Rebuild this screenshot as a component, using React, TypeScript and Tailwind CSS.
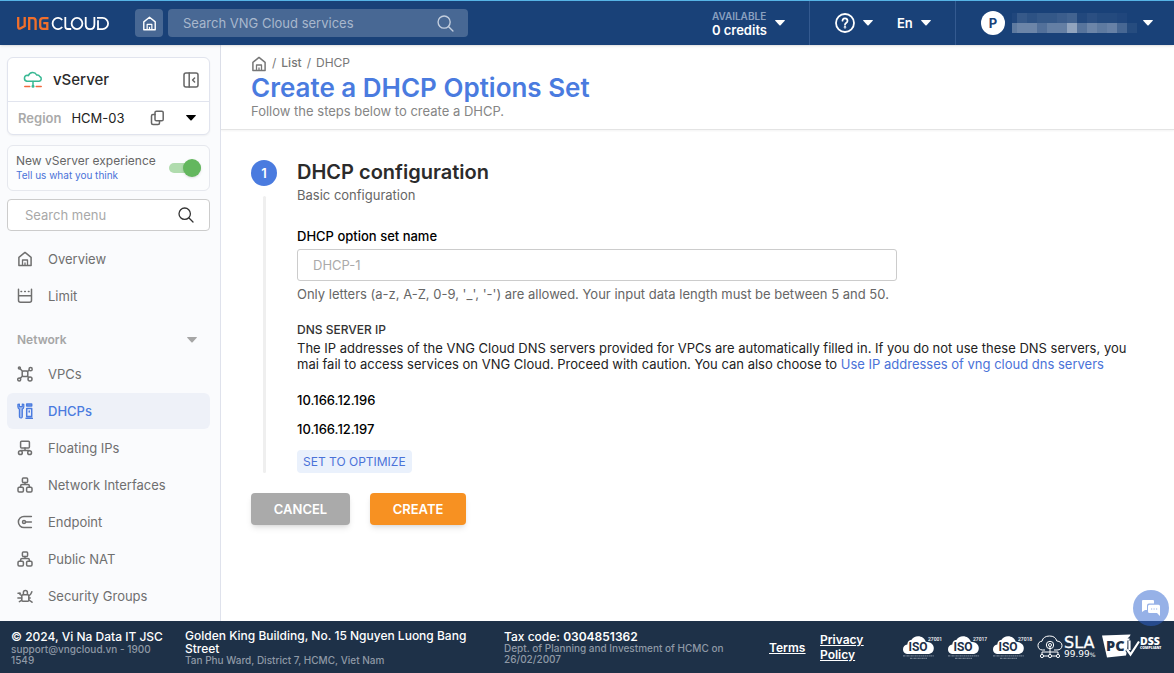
import React from "react";

type IconProps = { className?: string };

function Icon({ children, className = "size-4" }: { children: React.ReactNode; className?: string }) {
  return (
    <svg viewBox="0 0 16 16" className={`${className} shrink-0`} fill="none" stroke="currentColor" strokeWidth="1.5" strokeLinejoin="round" strokeLinecap="round" aria-hidden="true">
      {children}
    </svg>
  );
}

const HomeIcon = ({ className }: IconProps) => (
  <Icon className={className}>
    <path d="M1.9 6.3 8 1.4l6.100 4.900v8.300H1.900z" />
    <path d="M5.500 14.400V9h5v5.400M8 12v2.400" strokeWidth="1.300" />
  </Icon>
);
const LimitIcon = () => (
  <Icon>
    <path d="M1.5 1.3v11a2 2 0 0 0 2 2h9a2 2 0 0 0 2-2v-11M1.5 7.8h13" />
    <path d="M4 3.500h.6M7.700 3.500h.6M11.400 3.500h.6" />
  </Icon>
);
const VpcIcon = () => (
  <Icon>
    <rect x="5.2" y="5" width="5.6" height="5.4" rx="1.2" />
    <circle cx="2.4" cy="2" r="1" /><circle cx="13.6" cy="3.2" r="1.6" />
    <circle cx="2.2" cy="13.4" r="1.5" /><circle cx="13" cy="13" r="2" />
    <path d="m3.2 2.8 2.2 2.4M12.3 4.2l-1.8 1.3M5.4 10.2 3.2 12.4M10.6 10.2l1 1.2" />
  </Icon>
);
const DhcpIcon = () => (
  <Icon>
    <path d="M.9 1.400v2.400c0 1.300.7 1.900 1.500 2.400v7.300c0 2 2.900 2 2.900 0V6.200c.8-.5 1.500-1.100 1.500-2.400V1.400L5.300 1v2.600H2.400V1z" fill="currentColor" fillOpacity=".45" strokeWidth="1.200" />
    <path d="M9.700 1h5v2h-5z" fill="currentColor" fillOpacity=".5" />
    <path d="M9.700 5.600h5v8h-5zM9 15.200h6.400" />
    <path d="M12.200 8v1" />
  </Icon>
);
const FloatingIcon = () => (
  <Icon>
    <rect x="3.6" y="1.2" width="8.8" height="6.800" rx="1" />
    <path d="M8 8v2.200M3.800 10.400h8.400" />
    <circle cx="3.4" cy="12.700" r="1.900" /><circle cx="12.600" cy="12.700" r="1.900" />
  </Icon>
);
const NodesIcon = () => (
  <Icon>
    <rect x="5.4" y="1" width="5.2" height="4.6" rx="1" />
    <rect x="1" y="10.2" width="5.4" height="4.8" rx="1.2" />
    <rect x="9.6" y="10.2" width="5.4" height="4.8" rx="1.2" />
    <path d="M8 5.6v1.8M3.6 10V9c0-1 .6-1.6 1.6-1.6h5.6c1 0 1.6.6 1.6 1.6v1" />
  </Icon>
);
const EndpointIcon = () => (
  <Icon>
    <path d="M14.4 2.4H7a5.6 5.6 0 0 0 0 11.2h7.4M8.6 8h5.8" />
    <circle cx="7" cy="8" r="1.5" />
  </Icon>
);
const SecurityIcon = () => (
  <Icon>
    <rect x="4.800" y="6.800" width="7" height="6.400" rx="1" />
    <path d="M6.400 6.600V4.600a2 2 0 0 1 4 0v2M4.600 7.400C2.800 7.200 2.600 6 2.400 5M4.600 10H.9M4.600 12.400 2.400 13.600M12 7.400c1.800 0 2-1.600 2.800-3.600M12 10h1.200M12 12l3 2.200M1 5.200h2.400" />
  </Icon>
);
const SearchIcon = ({ className }: IconProps) => (
  <Icon className={className}>
    <circle cx="6.7" cy="6.7" r="5.7" strokeWidth="1.300" />
    <path d="m11 11 4 4" strokeWidth="1.300" />
  </Icon>
);
const Caret = ({ className = "text-white" }: IconProps) => (
  <svg viewBox="0 0 10 6" className={`h-1.5 w-2.5 shrink-0 ${className}`} fill="currentColor" aria-hidden="true">
    <path d="M.6 0h8.8q.9.1.3.8L5.6 5.3q-.6.6-1.2 0L.3.8Q-.3.1.6 0z" />
  </svg>
);

const Logo = () => (
  <svg viewBox="0 0 92 13" className="h-[13px] w-[92px] shrink-0" fill="none" aria-label="VNG Cloud">
    <g stroke="#f26f2b" strokeWidth="2.300">
      <path d="M1.200 0v9.800c0 1.800.9 2.400 2.500 1.500L7.700 9V0" />
      <path d="M12.200 13V1.200h3.800c1.800 0 2.600.9 2.600 2.700V13" />
      <path d="M31.500 1.200H26c-1.900 0-2.800.9-2.800 2.800v5c0 1.900.9 2.800 2.800 2.800h4.300V6.200h-4" />
    </g>
    <g stroke="#fff" strokeWidth="1.800">
      <path d="M45.200 3A5.400 5.600 0 1 0 45.200 10" />
      <path d="M48.300 0v9.500c0 1.700.8 2.500 2.400 2.500h3.500" />
      <ellipse cx="60" cy="6.500" rx="5.400" ry="5.600" />
      <path d="M68.700 0v7.500c0 2.800 1.700 4.600 4.300 4.600s4.400-1.800 4.400-4.600V0" />
      <path d="M81 3.200v8.900h4.500a5.600 5.600 0 0 0 0-11.200H80" />
    </g>
  </svg>
);

const nameMosaic: number[][] = [
  [0.03, 0.13, 0.09, 0.12, 0.12, 0.15, 0.18, 0.04, 0.08, 0.05, 0.05, 0.03, 0],
  [0.3, 0.36, 0.36, 0.25, 0.33, 0.33, 0.52, 0.27, 0.36, 0.3, 0.34, 0.2, 0.06],
];

type NavItem = { label: string; icon: React.ReactNode; active?: boolean };
const topItems: NavItem[] = [
  { label: "Overview", icon: <HomeIcon /> },
  { label: "Limit", icon: <LimitIcon /> },
];
const networkItems: NavItem[] = [
  { label: "VPCs", icon: <VpcIcon /> },
  { label: "DHCPs", icon: <DhcpIcon />, active: true },
  { label: "Floating IPs", icon: <FloatingIcon /> },
  { label: "Network Interfaces", icon: <NodesIcon /> },
  { label: "Endpoint", icon: <EndpointIcon /> },
  { label: "Public NAT", icon: <NodesIcon /> },
  { label: "Security Groups", icon: <SecurityIcon /> },
];

function NavList({ items }: { items: NavItem[] }) {
  return (
    <ul className="flex flex-col gap-px">
      {items.map((item) => (
        <li key={item.label}>
          <a href="#" aria-current={item.active ? "page" : undefined} className={`flex h-9 items-center gap-[15px] rounded-md px-2.5 ${item.active ? "bg-[#eef1f8] font-medium text-[#4a7bdf]" : "text-[#6f6f6f]"}`}>
            {item.icon}
            <span className="leading-4">{item.label}</span>
          </a>
        </li>
      ))}
    </ul>
  );
}

function Header() {
  return (
    <header className="relative z-10 flex h-[45px] shrink-0 items-center border-t border-[#56b4e6] bg-[#194178] text-white shadow-sm">
      <a href="#" className="ml-[17px]"><Logo /></a>
      <button aria-label="Home" className="ml-[26px] flex size-7 items-center justify-center rounded bg-[#486894]">
        <HomeIcon className="size-[15px]" />
      </button>
      <label className="ml-[5px] flex h-7 w-[300px] items-center rounded bg-[#486894] pr-3.5 pl-[15px]">
        <input aria-label="Search services" placeholder="Search VNG Cloud services" className="min-w-0 flex-1 bg-transparent pt-0.5 text-[13px] outline-none placeholder:text-[#a9b8cd]" />
        <SearchIcon className="size-[17px] text-[#c3cede]" />
      </label>
      <div className="ml-auto flex h-full items-center">
        <button className="flex items-center gap-2 pr-6 text-left">
          <span className="flex flex-col pt-0.5 font-semibold">
            <span className="text-[10px] leading-3 text-[#8aa0c0]">AVAILABLE</span>
            <span className="text-[13px] leading-4">0 credits</span>
          </span>
          <Caret />
        </button>
        <div className="flex h-full w-[146px] items-center border-l border-[#345a90] pl-[25px]">
          <button aria-label="Help" className="flex items-center gap-2">
            <svg viewBox="0 0 20 20" className="size-5" fill="none" stroke="white" strokeWidth="1.8" strokeLinecap="round" aria-hidden="true">
              <circle cx="10" cy="10" r="9" />
              <path d="M7.500 7.700a2.500 2.400 0 1 1 3.900 2c-.9.6-1.400 1-1.400 2.100" /><circle cx="10" cy="14.300" r=".4" fill="white" />
            </svg>
            <Caret />
          </button>
          <button className="ml-6 flex items-center gap-2 text-[13px] font-semibold"><span className="pt-0.5">En</span> <Caret /></button>
        </div>
        <button aria-label="Account" className="flex h-full items-center border-l border-[#345a90] pr-[21px] pl-[25px]">
          <span className="flex size-6 items-center justify-center rounded-full bg-white pt-0.5 text-[13px] font-bold text-[#194178]">P</span>
          <svg viewBox="0 0 125 20" className="ml-[7px] h-5 w-[125px]" shapeRendering="crispEdges" aria-hidden="true">
            {nameMosaic.map((row, r) => row.map((o, c) => <rect key={`${r}-${c}`} x={c === 0 ? 0 : c * 10 - 5} y={r * 10} width={c === 0 ? 5 : 10} height="10" fill="white" opacity={o} />))}
          </svg>
          <Caret className="ml-[6px] text-white" />
        </button>
      </div>
    </header>
  );
}

function Sidebar() {
  return (
    <aside className="flex w-[221px] shrink-0 flex-col border-r border-[#dfe2ec] bg-[#fafbfd] pt-3 pr-2.5 pb-1.5 pl-[7px]">
      <section className="rounded-md border border-[#e1e4ee] bg-white shadow-xs">
        <div className="flex h-11 items-center border-b border-[#e1e4ee] pr-2.5 pl-[15px]">
          <svg viewBox="0 0 20 17" className="h-[17px] w-5" fill="none" strokeWidth="1.500" strokeLinecap="round" aria-hidden="true">
            <path d="M3.800 10.300a3.100 3.100 0 0 1 .5-6.100q.6 0 1.200.3A4.500 4.500 0 0 1 13.700 4a2.600 2.600 0 0 1 3 1.500 2.500 2.500 0 0 1-.6 4.800z" stroke="#38b893" />
            <path d="M10 10.500v3.500" stroke="#38b893" />
            <path d="M1.800 15.500h5M13.200 15.500h5" stroke="#f1683c" /><circle cx="10" cy="15.300" r=".8" stroke="#38b893" />
          </svg>
          <span className="ml-2.5 pt-0.5 text-[15px] font-medium text-[#2b2b2b]">vServer</span>
          <button aria-label="Collapse menu" className="ml-auto text-[#666]">
            <Icon><rect x="1" y="1" width="14" height="14" rx="2" /><path d="M6.200 1v14M11.600 6l-2 2 2 2" /></Icon>
          </button>
        </div>
        <div className="flex h-8 items-center pr-[13px] pl-2.5">
          <span className="pt-0.5 font-semibold text-[#aaa]">Region</span>
          <span className="ml-2.5 pt-0.5 text-[#222]">HCM-03</span>
          <button aria-label="Copy region" className="ml-auto text-[#666]">
            <Icon><rect x="6" y="1.200" width="8.200" height="9.600" rx="1.400" /><path d="M6 4.400H4A1.500 1.500 0 0 0 2.500 5.900v7.200A1.500 1.500 0 0 0 4 14.600h5a1.500 1.500 0 0 0 1.500-1.500v-2" /></Icon>
          </button>
          <button aria-label="Choose region" className="ml-[21px]"><Caret className="text-black" /></button>
        </div>
      </section>

      <div className="mt-2.5 flex h-[46px] items-center rounded-md border border-[#e6e8ee] bg-[#fcfdfe] px-2">
        <div className="flex flex-col pb-0.5">
          <label htmlFor="new-experience" className="text-[12px] leading-4 text-[#666]">New vServer experience</label>
          <a href="#" className="text-[10px] leading-3 text-[#4a72d8]">Tell us what you think</a>
        </div>
        <label htmlFor="new-experience" className="relative ml-auto flex h-2.5 w-8 cursor-pointer items-center justify-end rounded-full bg-[#b0dcae]">
          <input id="new-experience" type="checkbox" role="switch" defaultChecked className="sr-only" />
          <span className="size-[18px] shrink-0 rounded-full bg-[#63b75e] shadow" />
        </label>
      </div>

      <label className="mt-2 flex h-8 items-center rounded border border-[#ccc] bg-white pr-[15px] pl-[17px]">
        <input aria-label="Search menu" placeholder="Search menu" className="min-w-0 flex-1 bg-transparent pt-0.5 outline-none placeholder:text-[#a8a8a8]" />
        <SearchIcon className="size-4 text-[#333]" />
      </label>

      <nav className="mt-2.5">
        <NavList items={topItems} />
        <button className="mt-2.5 flex h-8 w-full items-center justify-between pr-[13px] pl-2.5 text-[12px] font-semibold text-[#a6a6a6]">
          Network <Caret className="text-[#a6a6a6]" />
        </button>
        <NavList items={networkItems} />
      </nav>
    </aside>
  );
}

function Main() {
  return (
    <main className="flex min-w-0 flex-1 flex-col bg-white">
      <div className="border-b border-[#e4e4e4] px-[30px] py-2.5 text-[#858585] shadow-xs">
        <nav aria-label="Breadcrumb" className="flex h-4 items-center gap-[5px] text-[12px] text-[#777]">
          <a href="#" aria-label="Home" className="pt-0.5"><HomeIcon className="size-4" /></a>
          <span>/</span><a href="#" className="font-medium">List</a><span>/</span><span>DHCP</span>
        </nav>
        <h1 className="pt-px text-[26px] leading-8 font-semibold text-[#4a7bdf]">Create a DHCP Options Set</h1>
        <p className="-mt-px leading-4">Follow the steps below to create a DHCP.</p>
      </div>
      <div className="px-[30px] pt-[30px] pb-10">
        <div className="flex gap-5">
          <div className="flex w-[26px] shrink-0 flex-col items-center gap-2.5">
            <span className="flex size-[26px] items-center justify-center rounded-full bg-[#4a7bdf] pt-0.5 font-semibold text-white">1</span>
            <span className="w-[3px] flex-1 rounded bg-[#efefef]" />
          </div>
          <section className="min-w-0 flex-1">
            <h2 className="text-[20px] leading-6 font-semibold text-[#2b2b2b]">DHCP configuration</h2>
            <p className="mt-[3px] leading-4 text-[#666]">Basic configuration</p>
            <div className="mt-[25px] flex max-w-[600px] flex-col">
              <label htmlFor="dhcp-name" className="leading-4 font-medium text-black">DHCP option set name</label>
              <input id="dhcp-name" placeholder="DHCP-1" className="mt-[5px] h-8 rounded-[3px] border border-[#ccc] px-[15px] outline-none placeholder:text-[#aaa]" />
              <p className="mt-[5px] leading-4 text-[#666]">Only letters (a-z, A-Z, 0-9, '_', '-') are allowed. Your input data length must be between 5 and 50.</p>
            </div>
            <h3 className="mt-5 text-[12px] leading-4 font-medium text-[#333]">DNS SERVER IP</h3>
            <p className="mt-0.5 max-w-[840px] leading-4 text-[#222]">
              The IP addresses of the VNG Cloud DNS servers provided for VPCs are automatically filled in. If you do not use these DNS servers, you mai fail to access services on VNG Cloud. Proceed with caution. You can also choose to{" "}
              <a href="#" className="text-[#4a72d8]">Use IP addresses of vng cloud dns servers</a>
            </p>
            <p className="mt-5 leading-4 font-medium text-black">10.166.12.196</p>
            <p className="mt-[13px] leading-4 font-medium text-black">10.166.12.197</p>
            <button className="mt-[13px] block h-[23px] rounded bg-[#eaf1fc] px-1.5 text-[12px] text-[#4a72d8]">SET TO OPTIMIZE</button>
          </section>
        </div>
        <div className="mt-5 flex gap-5">
          <button className="h-8 w-[99px] rounded bg-[#aaa] pt-0.5 font-semibold text-white shadow-md">CANCEL</button>
          <button className="h-8 w-24 rounded bg-[#f79122] pt-0.5 font-semibold text-white shadow-md">CREATE</button>
        </div>
      </div>
    </main>
  );
}

function IsoBadge({ code }: { code: string }) {
  return (
    <svg viewBox="0 0 40 26" className="h-[26px] w-10 overflow-visible" aria-label={`ISO ${code}`}>
      <path d="M6.500 20C2.800 20 1 17.900 1 15.200c0-2.500 1.800-4.500 4.300-4.800.2-2.800 2-4.600 4.300-4.700C10.800 3.600 13.200 2.200 16 2.200c3.800 0 6.700 2.200 7.800 5.500 4.700.2 8 2.600 8 6.300S29.500 20 25.800 20z" fill="white" />
      <text x="16" y="17" textAnchor="middle" fontFamily="Liberation Sans Narrow, Roboto, sans-serif" fontWeight="700" fontSize="12" fill="#1e3148">ISO</text>
      <text x="26" y="6.500" fontFamily="Liberation Sans Narrow, Roboto, sans-serif" fontWeight="500" fontSize="5" fill="white">{code}</text>
      <path d="M1 21.800h31M8 24.300h17" stroke="#6d7b8c" strokeWidth="1.200" strokeDasharray="2 .5 1 .4" />
    </svg>
  );
}

function SlaBadge() {
  return (
    <svg viewBox="0 0 60 26" className="h-[26px] w-[60px] overflow-visible" aria-label="SLA 99.99%">
      <g fill="none" stroke="white" strokeWidth="1">
        <path d="M8 16H5.500C2.500 16 1 14 1 11.500S2.500 7.500 5 7.200C5.700 3.800 8.500 2 12.500 2s6.300 1.600 7.300 5c3.200.2 5.200 2 5.200 4.600S23 16 20 16h-3" />
        <circle cx="13" cy="11" r="3.700" /><circle cx="13" cy="11" r="1.500" />
        <path d="M13 12v8M5 20v-2h16v2M7 22h4M15 22h4" />
        <circle cx="5" cy="22" r="1.600" /><circle cx="13" cy="22" r="1.600" /><circle cx="21" cy="22" r="1.600" />
      </g>
      <text x="27" y="14" fontFamily="DejaVu Sans, sans-serif" fontSize="16" fill="white" stroke="white" strokeWidth=".3">SLA</text>
      <text x="27" y="23" fontFamily="DejaVu Sans, sans-serif" fontSize="9" fill="white">99.99<tspan fontSize="6">%</tspan></text>
    </svg>
  );
}

function PciBadge() {
  return (
    <svg viewBox="0 0 60 26" className="h-[26px] w-[60px] overflow-visible" aria-label="PCI DSS compliant">
      <path d="M0 1.500 28.500 .5l-4.500 21-19 2z" fill="white" />
      <text x="4" y="17" fontFamily="Open Sans, sans-serif" fontWeight="800" fontSize="14.500" fill="#1e3148">PC</text>
      <path d="M27.500 6.500V17M25 15.500l3.500 5L37 7.500" fill="none" stroke="#1e3148" strokeWidth="4.200" />
      <path d="M25.500 4.500 29.500.5v4z" fill="#1e3148" />
      <path d="M27.500 6.500V16" fill="none" stroke="white" strokeWidth="2.200" />
      <path d="m25 15.500 3.500 5L37 7.500" fill="none" stroke="white" strokeWidth="2.200" />
      <text x="38" y="11" fontFamily="Open Sans, sans-serif" fontWeight="800" fontSize="10.500" fill="white">DSS</text>
      <text x="38" y="15" fontFamily="Open Sans, sans-serif" fontWeight="800" fontSize="3.500" fill="white">COMPLIANT</text>
    </svg>
  );
}

function Footer() {
  return (
    <footer className="flex min-h-[52px] shrink-0 bg-[#1e3148] pl-[11px] text-white">
      <div className="w-[174px] shrink-0 pt-[9px] pr-4">
        <p className="text-[12px] leading-[14px] font-medium whitespace-nowrap">© 2024, Vi Na Data IT JSC</p>
        <p className="text-[10px] leading-[11px] font-medium text-[#8f99a6]">support@vngcloud.vn - 1900 1549</p>
      </div>
      <div className="w-[319px] shrink-0 pt-2 pr-7">
        <p className="text-[12px] leading-[13px] font-medium">Golden King Building, No. 15 Nguyen Luong Bang Street</p>
        <p className="text-[10px] leading-[11px] font-medium text-[#8f99a6]">Tan Phu Ward, District 7, HCMC, Viet Nam</p>
      </div>
      <div className="w-[265px] shrink-0 pt-[9px] pr-10">
        <p className="text-[12px] leading-[13px] font-medium">Tax code: <strong className="font-semibold">0304851362</strong></p>
        <p className="text-[10px] leading-[11px] font-medium text-[#8f99a6]">Dept. of Planning and Investment of HCMC on 26/02/2007</p>
      </div>
      <div className="flex flex-1 items-center text-[12px] leading-[15px] font-semibold underline">
        <a href="#" className="w-[51px] shrink-0">Terms</a>
        <a href="#" className="w-[60px] shrink-0">Privacy Policy</a>
      </div>
      <div className="flex shrink-0 items-center gap-[5px] pr-3">
        <IsoBadge code="27001" /><IsoBadge code="27017" /><IsoBadge code="27018" />
        <SlaBadge />
        <PciBadge />
      </div>
    </footer>
  );
}

export default function App() {
  return (
    <div className="flex min-h-screen flex-col bg-white font-['Inter',sans-serif] text-[13px]">
      <Header />
      <div className="flex flex-1">
        <Sidebar />
        <Main />
      </div>
      <Footer />
      <button aria-label="Open chat" className="fixed right-[5px] bottom-[47px] flex size-9 items-center justify-center rounded-full bg-[#2d63cf]/50">
        <svg viewBox="0 0 20 18" className="h-[18px] w-5" fill="white" aria-hidden="true">
          <path d="M2 1h10q1 0 1 1v2.500H8Q6 4.500 6 6.500V11H4l-3 2V2q0-1 1-1z" />
          <path d="M8.500 5.700h9q1.500 0 1.500 1.500V17l-3-3H8.500Q7 14 7 12.500V7.200q0-1.500 1.500-1.500z" />
          <path d="M10 10h1.200M12.500 10h1.200M15 10h1.200" stroke="#96b1e7" />
        </svg>
      </button>
    </div>
  );
}
